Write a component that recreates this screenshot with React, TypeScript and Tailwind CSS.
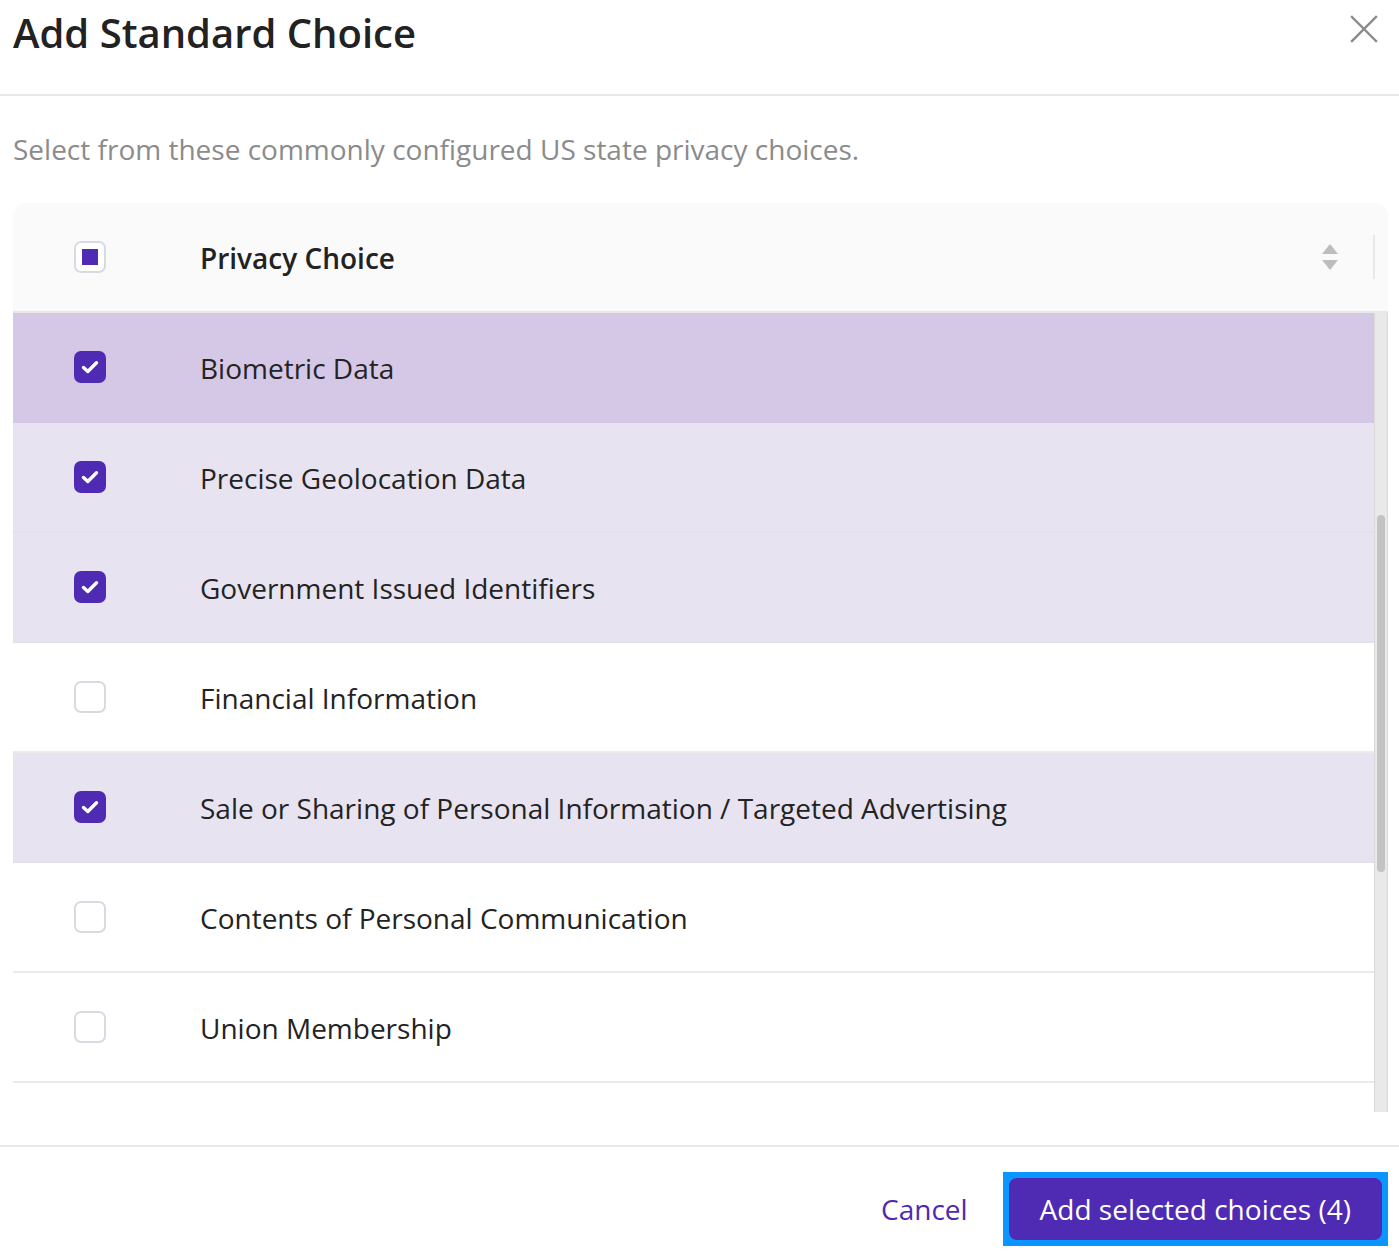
import { useState } from "react";

type Choice = {
  id: string;
  label: string;
  checked: boolean;
};

const initialChoices: Choice[] = [
  { id: "bio", label: "Biometric Data", checked: true },
  { id: "geo", label: "Precise Geolocation Data", checked: true },
  { id: "gov", label: "Government Issued Identifiers", checked: true },
  { id: "fin", label: "Financial Information", checked: false },
  { id: "sale", label: "Sale or Sharing of Personal Information / Targeted Advertising", checked: true },
  { id: "comm", label: "Contents of Personal Communication", checked: false },
  { id: "union", label: "Union Membership", checked: false },
];

function Checkbox({ state, onClick }: { state: "on" | "off" | "some"; onClick?: () => void }) {
  if (state === "on") {
    return (
      <button
        onClick={onClick}
        className="w-[32px] h-[32px] rounded-[7px] bg-[#4f2ab3] flex items-center justify-center shrink-0"
        aria-label="Uncheck"
      >
        <svg width="22" height="22" viewBox="0 0 22 22" fill="none">
          <path d="M4.5 11.5l4.3 4 8.7-8.8" stroke="white" strokeWidth="3.4" strokeLinecap="round" strokeLinejoin="round" />
        </svg>
      </button>
    );
  }
  return (
    <button
      onClick={onClick}
      className="w-[32px] h-[32px] rounded-[7px] border-2 border-[#d7dbe1] bg-white flex items-center justify-center shrink-0"
      aria-label="Check"
    >
      {state === "some" && <span className="block w-[16px] h-[16px] bg-[#4f2ab3]" />}
    </button>
  );
}

export default function App() {
  const [choices, setChoices] = useState<Choice[]>(initialChoices);
  const selectedCount = choices.filter((c) => c.checked).length;
  const headerState = selectedCount === 0 ? "off" : selectedCount === choices.length ? "on" : "some";

  const toggle = (id: string) => {
    setChoices((prev) => prev.map((c) => (c.id === id ? { ...c, checked: !c.checked } : c)));
  };

  const toggleAll = () => {
    const next = selectedCount !== choices.length;
    setChoices((prev) => prev.map((c) => ({ ...c, checked: next })));
  };

  return (
    <div className="w-[1399px] h-[1254px] bg-white flex flex-col font-['Open_Sans',sans-serif] text-[#232323]">
      {/* header */}
      <div className="h-[96px] shrink-0 flex items-start justify-between border-b-2 border-[#e8e8e8] pl-[13px] pr-[20px]">
        <h1 className="text-[40px] leading-[54px] font-semibold pt-[6px] text-[#222]">Add Standard Choice</h1>
        <button className="mt-[14px] text-[#8a8a8a]" aria-label="Close">
          <svg width="30" height="30" viewBox="0 0 30 30" fill="none">
            <path d="M3 3l24 24M27 3L3 27" stroke="currentColor" strokeWidth="2.4" strokeLinecap="square" />
          </svg>
        </button>
      </div>

      {/* body */}
      <div className="flex-1 flex flex-col pl-[13px] pr-[11px]">
        <p className="mt-[34px] text-[28px] leading-[38px] text-[#8b8b8b]">
          Select from these commonly configured US state privacy choices.
        </p>

        <div className="mt-[35px] flex flex-col">
          <div className="h-[110px] bg-[#fafafa] rounded-t-[14px] border-b-2 border-[#e8e8e8] flex items-center">
            <div className="w-[154px] flex justify-center">
              <Checkbox state={headerState} onClick={toggleAll} />
            </div>
            <span className="ml-[33px] pt-[2px] text-[28px] font-semibold text-[#222]">Privacy Choice</span>
            <div className="ml-auto flex items-center">
              <svg width="18" height="28" viewBox="0 0 18 28" className="mr-[34px]">
                <path d="M9 1L17 11H1z" fill="#bdbdbd" />
                <path d="M9 27L17 17H1z" fill="#bdbdbd" />
              </svg>
              <div className="w-[2px] h-[44px] bg-[#e8e8e8] mr-[13px]" />
            </div>
          </div>

          <div className="h-[799px] flex">
            <div className="flex-1 flex flex-col">
              {choices.map((c, i) => (
                <div
                  key={c.id}
                  onClick={() => toggle(c.id)}
                  className={`h-[110px] shrink-0 flex items-center border-b-2 cursor-pointer ${
                    c.checked
                      ? i === 0
                        ? "bg-[#d5c7e6] border-[#d5c7e6]"
                        : "bg-[#e8e3f1] border-[#e4e0ec]"
                      : "bg-white border-[#ebebeb]"
                  }`}
                >
                  <div className="w-[154px] flex justify-center">
                    <Checkbox state={c.checked ? "on" : "off"} onClick={() => toggle(c.id)} />
                  </div>
                  <span className="ml-[33px] pt-[2px] text-[28px] text-[#232323]">{c.label}</span>
                </div>
              ))}
            </div>
            <div className="w-[14px] bg-[#e9e9e9] border-l border-r border-[#d9d9d9] flex justify-center">
              <div className="mt-[202px] w-[8px] h-[357px] rounded-full bg-[#c3c3c3]" />
            </div>
          </div>
        </div>
      </div>

      {/* footer */}
      <div className="h-[109px] shrink-0 border-t-2 border-[#e8e8e8] flex items-start justify-end pr-[11px] pt-[25px]">
        <div className="flex items-center">
          <button className="text-[28px] text-[#4f2ab3] mr-[35px]">Cancel</button>
          <div className="bg-[#0b96ff] p-[6px]">
            <button className="h-[62px] px-[31px] rounded-[8px] bg-[#4f2ab3] text-white text-[28px]">
              Add selected choices ({selectedCount})
            </button>
          </div>
        </div>
      </div>
    </div>
  );
}
